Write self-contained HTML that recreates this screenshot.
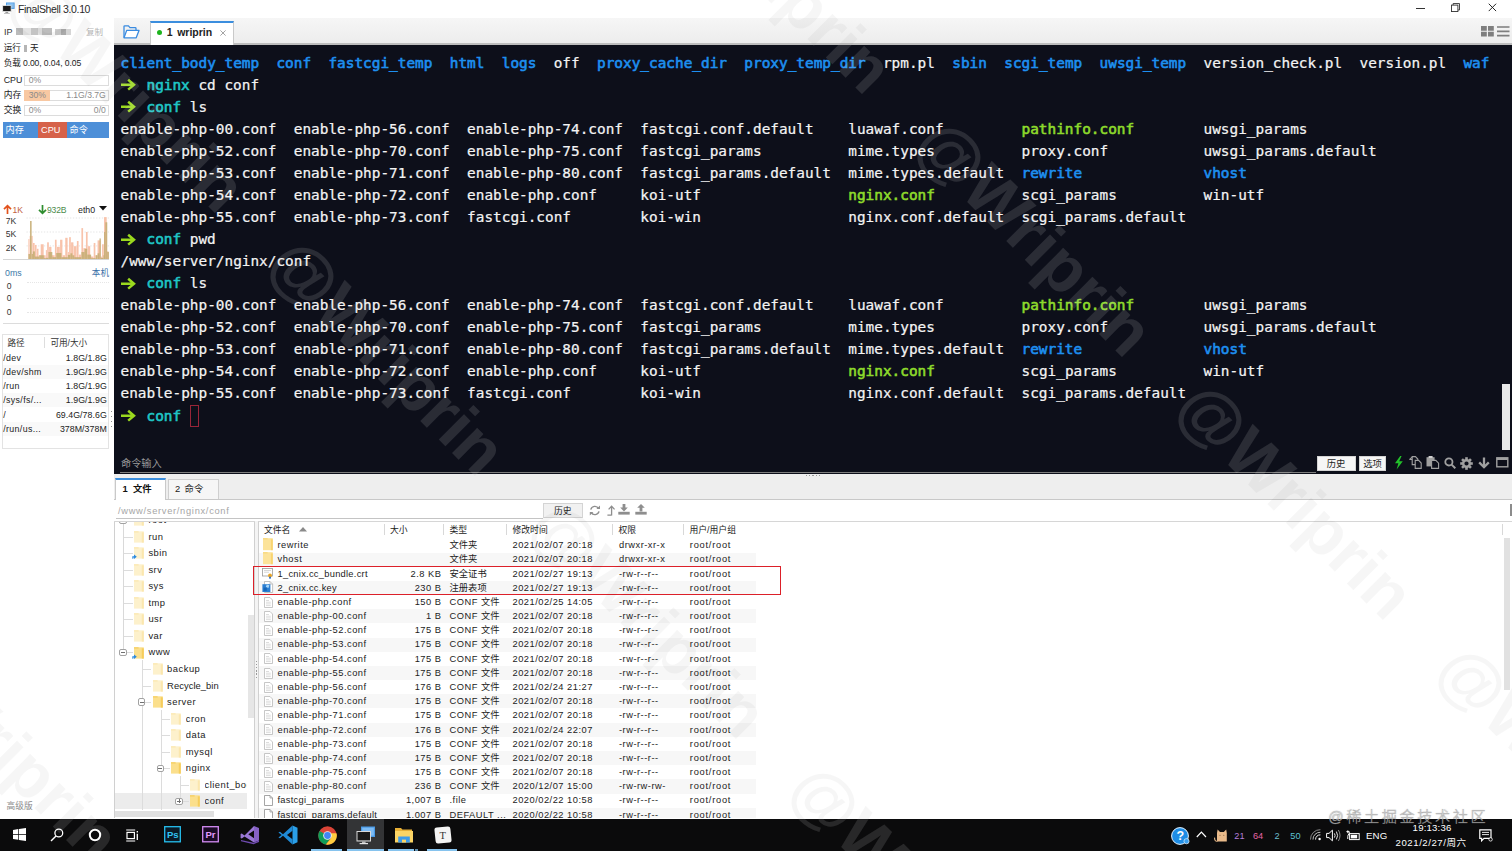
<!DOCTYPE html><html lang="zh"><head><meta charset="utf-8"><title>FinalShell 3.0.10</title><style>
*{box-sizing:border-box;margin:0;padding:0}
html,body{width:1512px;height:851px;overflow:hidden;background:#fff}
body{position:relative;font-family:"Liberation Sans","Noto Sans CJK SC",sans-serif;font-size:10px;color:#222;-webkit-font-smoothing:antialiased}
.a{position:absolute;white-space:nowrap}
.term{position:absolute;left:114px;top:45px;width:1398px;height:429px;background:#0d0f1a}
.tl{position:absolute;left:6.5px;height:22px;line-height:22px;white-space:pre;font-family:"DejaVu Sans Mono","Liberation Mono",monospace;font-size:14.4px;color:#f4f4f4;letter-spacing:0px;-webkit-text-stroke:0.22px}
.b{color:#1e8ff0;-webkit-text-stroke:0.6px}
.g{color:#9bd91e;-webkit-text-stroke:0.6px}
.c{color:#1fc6c6;-webkit-text-stroke:0.6px}
.y{color:#8dda2c;-webkit-text-stroke:0.6px}
.ar{display:inline-block;vertical-align:-2px;margin-left:-1px;margin-right:1px}
.k{letter-spacing:0}

.wm{position:absolute;left:0;top:0;width:1512px;height:851px;overflow:hidden;pointer-events:none}
.wm span{position:absolute;font:bold 67.5px/67.5px "Liberation Sans",sans-serif;white-space:nowrap;transform:translate(-50%,-50%) rotate(45deg)}
.wl{clip-path:path(evenodd,"M0 0H1512V851H0Z M114 44.7H1512V474H114Z M0 819.3H1512V851H0Z")}
.wl span{color:rgba(0,0,0,0.034)}
.wd{clip-path:path(evenodd,"M114 44.7H1512V474H114Z M0 819.3H1512V851H0Z")}
.wd span{color:rgba(255,255,255,0.12)}
.ui{font-size:10px}
</style></head><body>
<div class="a" style="left:0;top:0;width:1512px;height:18px;background:#fff"></div>
<div class="a" style="left:18px;top:3px;font-size:10.5px;line-height:12px;letter-spacing:-0.36px;color:#2a2a2a">FinalShell 3.0.10</div>
<div class="a" style="left:114px;top:18px;width:1398px;height:27px;background:linear-gradient(#f6f6f6,#ececec)"></div>
<div class="a" style="left:114px;top:43.4px;width:1398px;height:1.3px;background:#bdbdbd"></div>
<div class="a" style="left:150px;top:21px;width:84px;height:24px;background:#fff;border:1px solid #c9c9c9;border-top:2px solid #3b8ede;border-bottom:none"></div>
<div class="a" style="left:156.9px;top:30.2px;width:5.2px;height:5.2px;border-radius:50%;background:#1db31d"></div>
<div class="a" style="left:166.8px;top:25.4px;font-size:10.5px;line-height:14px;font-weight:bold;word-spacing:1.6px;color:#222">1 wriprin</div>
<svg class="a" style="left:219.8px;top:29.7px" width="6" height="6" viewBox="0 0 6 6"><path d="M0.4 0.4L5.6 5.6M5.6 0.4L0.4 5.6" stroke="#9a9a9a" stroke-width="0.9"/></svg>
<div class="term">
<div class="tl" style="top:6.70px"><span class="b">client_body_temp</span>  <span class="b">conf</span>  <span class="b">fastcgi_temp</span>  <span class="b">html</span>  <span class="b">logs</span>  off  <span class="b">proxy_cache_dir</span>  <span class="b">proxy_temp_dir</span>  rpm.pl  <span class="b">sbin</span>  <span class="b">scgi_temp</span>  <span class="b">uwsgi_temp</span>  version_check.pl  version.pl  <span class="b">waf</span></div>
<div class="tl" style="top:28.75px"><svg class="ar" viewBox="0 0 18 14" width="17.3" height="13.4"><path d="M1 7H14M8.5 1.8L14.6 7L8.5 12.2" fill="none" stroke="#9bd91e" stroke-width="2.6" stroke-linecap="butt" stroke-linejoin="miter"/></svg> <span class="c">nginx</span> cd conf</div>
<div class="tl" style="top:50.80px"><svg class="ar" viewBox="0 0 18 14" width="17.3" height="13.4"><path d="M1 7H14M8.5 1.8L14.6 7L8.5 12.2" fill="none" stroke="#9bd91e" stroke-width="2.6" stroke-linecap="butt" stroke-linejoin="miter"/></svg> <span class="c">conf</span> ls</div>
<div class="tl" style="top:72.85px">enable-php-00.conf  enable-php-56.conf  enable-php-74.conf  fastcgi.conf.default    luawaf.conf         <span class="y">pathinfo.conf</span>        uwsgi_params</div>
<div class="tl" style="top:94.90px">enable-php-52.conf  enable-php-70.conf  enable-php-75.conf  fastcgi_params          mime.types          proxy.conf           uwsgi_params.default</div>
<div class="tl" style="top:116.95px">enable-php-53.conf  enable-php-71.conf  enable-php-80.conf  fastcgi_params.default  mime.types.default  <span class="b">rewrite</span>              <span class="b">vhost</span></div>
<div class="tl" style="top:139.00px">enable-php-54.conf  enable-php-72.conf  enable-php.conf     koi-utf                 <span class="y">nginx.conf</span>          scgi_params          win-utf</div>
<div class="tl" style="top:161.05px">enable-php-55.conf  enable-php-73.conf  fastcgi.conf        koi-win                 nginx.conf.default  scgi_params.default</div>
<div class="tl" style="top:183.10px"><svg class="ar" viewBox="0 0 18 14" width="17.3" height="13.4"><path d="M1 7H14M8.5 1.8L14.6 7L8.5 12.2" fill="none" stroke="#9bd91e" stroke-width="2.6" stroke-linecap="butt" stroke-linejoin="miter"/></svg> <span class="c">conf</span> pwd</div>
<div class="tl" style="top:205.15px">/www/server/nginx/conf</div>
<div class="tl" style="top:227.20px"><svg class="ar" viewBox="0 0 18 14" width="17.3" height="13.4"><path d="M1 7H14M8.5 1.8L14.6 7L8.5 12.2" fill="none" stroke="#9bd91e" stroke-width="2.6" stroke-linecap="butt" stroke-linejoin="miter"/></svg> <span class="c">conf</span> ls</div>
<div class="tl" style="top:249.25px">enable-php-00.conf  enable-php-56.conf  enable-php-74.conf  fastcgi.conf.default    luawaf.conf         <span class="y">pathinfo.conf</span>        uwsgi_params</div>
<div class="tl" style="top:271.30px">enable-php-52.conf  enable-php-70.conf  enable-php-75.conf  fastcgi_params          mime.types          proxy.conf           uwsgi_params.default</div>
<div class="tl" style="top:293.35px">enable-php-53.conf  enable-php-71.conf  enable-php-80.conf  fastcgi_params.default  mime.types.default  <span class="b">rewrite</span>              <span class="b">vhost</span></div>
<div class="tl" style="top:315.40px">enable-php-54.conf  enable-php-72.conf  enable-php.conf     koi-utf                 <span class="y">nginx.conf</span>          scgi_params          win-utf</div>
<div class="tl" style="top:337.45px">enable-php-55.conf  enable-php-73.conf  fastcgi.conf        koi-win                 nginx.conf.default  scgi_params.default</div>
<div class="tl" style="top:359.50px"><svg class="ar" viewBox="0 0 18 14" width="17.3" height="13.4"><path d="M1 7H14M8.5 1.8L14.6 7L8.5 12.2" fill="none" stroke="#9bd91e" stroke-width="2.6" stroke-linecap="butt" stroke-linejoin="miter"/></svg> <span class="c">conf</span> </div>
</div>
<div class="a" style="left:4.0px;top:25.5px;line-height:12px;font-size:9px;color:#333">IP</div>
<div class="a" style="left:15.5px;top:28.0px;width:36.0px;height:7.0px;background:linear-gradient(90deg,#bbb 0 20%,#e4e4e4 20% 42%,#c4c4c4 42% 60%,#e0e0e0 60% 72%,#bdbdbd 72% 100%);filter:blur(0.6px)"></div>
<div class="a" style="left:55.0px;top:29.0px;width:15.5px;height:6.0px;background:linear-gradient(90deg,#ccc 0 40%,#aaa 40% 70%,#d5d5d5 70%);filter:blur(0.6px)"></div>
<div class="a" style="left:86.0px;top:25.5px;line-height:12px;font-size:8.5px;color:#b4b4b4">复制</div>
<div class="a" style="left:3.7px;top:42.0px;line-height:12px;font-size:8.6px;color:#222">运行</div>
<div class="a" style="left:24.0px;top:44.5px;width:2.6px;height:7.0px;background:#b5b5b5"></div>
<div class="a" style="left:30.0px;top:42.0px;line-height:12px;font-size:8.6px;color:#222">天</div>
<div class="a" style="left:3.7px;top:57.4px;line-height:12px;font-size:8.6px;color:#222;letter-spacing:-0.1px">负载 0.00, 0.04, 0.05</div>
<div class="a" style="left:3.7px;top:74.2px;line-height:12px;font-size:8.8px;color:#222">CPU</div>
<div class="a" style="left:24.3px;top:74.5px;width:84.5px;height:11.4px;border:1px solid #dcdcdc;background:#fff"></div>
<div class="a" style="left:28.7px;top:74.2px;line-height:12px;font-size:8.6px;color:#8a8a8a">0%</div>
<div class="a" style="left:3.7px;top:89.4px;line-height:12px;font-size:8.8px;color:#222">内存</div>
<div class="a" style="left:24.3px;top:89.7px;width:84.5px;height:11.4px;border:1px solid #dcdcdc;background:#fff"></div>
<div class="a" style="left:24.3px;top:89.7px;width:25.7px;height:11.4px;background:#f8c8a2"></div>
<div class="a" style="left:28.7px;top:89.4px;line-height:12px;font-size:8.6px;color:#8a8a8a">30%</div>
<div class="a" style="right:1406.2px;top:89.4px;line-height:12px;text-align:right;font-size:8.6px;color:#8a8a8a">1.1G/3.7G</div>
<div class="a" style="left:3.7px;top:104.2px;line-height:12px;font-size:8.8px;color:#222">交换</div>
<div class="a" style="left:24.3px;top:104.5px;width:84.5px;height:11.4px;border:1px solid #dcdcdc;background:#fff"></div>
<div class="a" style="left:28.7px;top:104.2px;line-height:12px;font-size:8.6px;color:#8a8a8a">0%</div>
<div class="a" style="right:1406.2px;top:104.2px;line-height:12px;text-align:right;font-size:8.6px;color:#8a8a8a">0/0</div>
<div class="a" style="left:3.2px;top:122.4px;width:35.0px;height:15.2px;background:#4d8fd8"></div>
<div class="a" style="left:38.2px;top:122.4px;width:28.7px;height:15.2px;background:#d6624a"></div>
<div class="a" style="left:66.9px;top:122.4px;width:42.6px;height:15.2px;background:#4d8fd8"></div>
<div class="a" style="left:5.5px;top:124.2px;line-height:12px;font-size:9.2px;color:#fff">内存</div>
<div class="a" style="left:41.0px;top:124.2px;line-height:12px;font-size:9.2px;color:#fff">CPU</div>
<div class="a" style="left:69.5px;top:124.2px;line-height:12px;font-size:9.2px;color:#fff">命令</div>
<svg class="a" style="left:3px;top:204px" width="9" height="11" viewBox="0 0 9 11"><path d="M4.5 10V2M1 5.2L4.5 1.6L8 5.2" fill="none" stroke="#e2521c" stroke-width="1.7"/></svg>
<div class="a" style="left:12.4px;top:203.5px;line-height:12px;font-size:8.6px;color:#c2623e">1K</div>
<svg class="a" style="left:37.5px;top:204px" width="9" height="11" viewBox="0 0 9 11"><path d="M4.5 1V9M1 5.8L4.5 9.4L8 5.8" fill="none" stroke="#2f8d2f" stroke-width="1.7"/></svg>
<div class="a" style="left:47.0px;top:203.5px;line-height:12px;font-size:8.6px;color:#4b8b4b;letter-spacing:-0.2px">932B</div>
<div class="a" style="left:78.0px;top:203.5px;line-height:12px;font-size:8.8px;color:#222">eth0</div>
<svg class="a" style="left:99px;top:206px" width="8" height="5" viewBox="0 0 8 5"><path d="M0 0H8L4 4.6Z" fill="#111"/></svg>
<div class="a" style="left:5.8px;top:215.4px;line-height:12px;font-size:8.6px;color:#333">7K</div>
<div class="a" style="left:5.8px;top:228.3px;line-height:12px;font-size:8.6px;color:#333">5K</div>
<div class="a" style="left:5.8px;top:242.2px;line-height:12px;font-size:8.6px;color:#333">2K</div>
<svg class="a" style="left:20px;top:210px" width="95" height="55" viewBox="0 0 95 55"><line x1="6.5" y1="8.0" x2="89" y2="8.0" stroke="#dedede" stroke-width="0.8" stroke-dasharray="1.3 1.6"/><line x1="6.5" y1="22.0" x2="89" y2="22.0" stroke="#dedede" stroke-width="0.8" stroke-dasharray="1.3 1.6"/><line x1="6.5" y1="35.9" x2="89" y2="35.9" stroke="#dedede" stroke-width="0.8" stroke-dasharray="1.3 1.6"/><rect x="8.40" y="29.09" width="1.04" height="20.36" fill="#f8c3ab"/><rect x="9.70" y="25.86" width="1.69" height="23.59" fill="#f8c3ab"/><rect x="11.64" y="25.86" width="1.04" height="23.59" fill="#f8c3ab"/><rect x="12.93" y="32.97" width="1.69" height="16.48" fill="#f8c3ab"/><rect x="14.87" y="34.91" width="1.69" height="14.54" fill="#f8c3ab"/><rect x="16.81" y="38.78" width="1.69" height="10.67" fill="#f8c3ab"/><rect x="18.75" y="45.25" width="1.69" height="4.20" fill="#f8c3ab"/><rect x="20.69" y="34.26" width="2.98" height="15.19" fill="#f8c3ab"/><rect x="23.92" y="45.25" width="1.69" height="4.20" fill="#f8c3ab"/><rect x="25.86" y="40.08" width="1.04" height="9.37" fill="#f8c3ab"/><rect x="27.15" y="32.32" width="1.69" height="17.13" fill="#f8c3ab"/><rect x="29.09" y="36.85" width="2.34" height="12.61" fill="#f8c3ab"/><rect x="31.67" y="45.25" width="2.98" height="4.20" fill="#f8c3ab"/><rect x="34.91" y="29.73" width="1.69" height="19.72" fill="#f8c3ab"/><rect x="36.85" y="36.85" width="2.98" height="12.61" fill="#f8c3ab"/><rect x="40.08" y="29.73" width="2.34" height="19.72" fill="#f8c3ab"/><rect x="42.66" y="45.25" width="2.34" height="4.20" fill="#f8c3ab"/><rect x="45.25" y="27.80" width="2.34" height="21.65" fill="#f8c3ab"/><rect x="47.83" y="42.02" width="1.04" height="7.43" fill="#f8c3ab"/><rect x="49.13" y="27.15" width="1.69" height="22.30" fill="#f8c3ab"/><rect x="51.07" y="32.32" width="2.34" height="17.13" fill="#f8c3ab"/><rect x="53.65" y="36.20" width="2.98" height="13.25" fill="#f8c3ab"/><rect x="56.88" y="31.03" width="1.69" height="18.42" fill="#f8c3ab"/><rect x="58.82" y="44.60" width="2.34" height="4.85" fill="#f8c3ab"/><rect x="61.41" y="18.10" width="1.69" height="31.35" fill="#f8c3ab"/><rect x="63.35" y="38.14" width="2.34" height="11.31" fill="#f8c3ab"/><rect x="65.93" y="21.98" width="1.69" height="27.47" fill="#f8c3ab"/><rect x="67.87" y="36.20" width="2.34" height="13.25" fill="#f8c3ab"/><rect x="70.46" y="46.54" width="2.98" height="2.91" fill="#f8c3ab"/><rect x="73.69" y="32.97" width="1.69" height="16.48" fill="#f8c3ab"/><rect x="75.63" y="45.25" width="1.69" height="4.20" fill="#f8c3ab"/><rect x="77.57" y="30.38" width="2.98" height="19.07" fill="#f8c3ab"/><rect x="80.80" y="46.54" width="1.04" height="2.91" fill="#f8c3ab"/><rect x="82.09" y="34.26" width="1.69" height="15.19" fill="#f8c3ab"/><rect x="84.03" y="7.11" width="2.66" height="42.34" fill="#f8c3ab"/><rect x="86.94" y="41.37" width="1.69" height="8.08" fill="#f8c3ab"/><rect x="8.40" y="43.96" width="1.62" height="5.49" fill="#c7ae76" opacity="0.9"/><rect x="10.02" y="10.99" width="1.62" height="38.46" fill="#c7ae76" opacity="0.9"/><rect x="11.64" y="43.96" width="1.29" height="5.49" fill="#c7ae76" opacity="0.9"/><rect x="12.93" y="41.37" width="1.94" height="8.08" fill="#c7ae76" opacity="0.9"/><rect x="14.87" y="46.54" width="4.52" height="2.91" fill="#c7ae76" opacity="0.9"/><rect x="19.39" y="45.25" width="4.52" height="4.20" fill="#c7ae76" opacity="0.9"/><rect x="23.92" y="48.16" width="1.94" height="1.29" fill="#c7ae76" opacity="0.9"/><rect x="25.86" y="47.83" width="2.59" height="1.62" fill="#c7ae76" opacity="0.9"/><rect x="28.44" y="42.02" width="3.88" height="7.43" fill="#c7ae76" opacity="0.9"/><rect x="32.32" y="47.19" width="3.88" height="2.26" fill="#c7ae76" opacity="0.9"/><rect x="36.20" y="42.99" width="5.17" height="6.46" fill="#c7ae76" opacity="0.9"/><rect x="41.37" y="47.19" width="6.46" height="2.26" fill="#c7ae76" opacity="0.9"/><rect x="47.83" y="44.93" width="2.59" height="4.52" fill="#c7ae76" opacity="0.9"/><rect x="50.42" y="43.31" width="1.94" height="6.14" fill="#c7ae76" opacity="0.9"/><rect x="52.36" y="45.25" width="1.94" height="4.20" fill="#c7ae76" opacity="0.9"/><rect x="54.30" y="47.19" width="7.11" height="2.26" fill="#c7ae76" opacity="0.9"/><rect x="61.41" y="42.02" width="3.23" height="7.43" fill="#c7ae76" opacity="0.9"/><rect x="64.64" y="38.78" width="2.59" height="10.67" fill="#c7ae76" opacity="0.9"/><rect x="67.23" y="44.60" width="3.88" height="4.85" fill="#c7ae76" opacity="0.9"/><rect x="71.11" y="48.16" width="4.52" height="1.29" fill="#c7ae76" opacity="0.9"/><rect x="75.63" y="45.25" width="1.94" height="4.20" fill="#c7ae76" opacity="0.9"/><rect x="77.57" y="43.31" width="1.94" height="6.14" fill="#c7ae76" opacity="0.9"/><rect x="79.51" y="28.44" width="1.29" height="21.01" fill="#c7ae76" opacity="0.9"/><rect x="80.80" y="47.83" width="2.59" height="1.62" fill="#c7ae76" opacity="0.9"/><rect x="83.39" y="45.25" width="1.29" height="4.20" fill="#c7ae76" opacity="0.9"/><rect x="84.03" y="21.98" width="1.29" height="27.47" fill="#c7ae76" opacity="0.9"/><rect x="85.33" y="12.28" width="1.94" height="37.17" fill="#c7ae76" opacity="0.9"/><rect x="87.27" y="42.02" width="1.62" height="7.43" fill="#c7ae76" opacity="0.9"/></svg>
<div class="a" style="left:3.3px;top:259.4px;width:106.0px;height:1.0px;background:#d6d6d6"></div>
<div class="a" style="left:5.0px;top:266.5px;line-height:12px;font-size:8.8px;color:#3c7aa8">0ms</div>
<div class="a" style="left:91.8px;top:266.5px;line-height:12px;font-size:8.6px;color:#3c6fa8">本机</div>
<div class="a" style="left:6.8px;top:280.2px;line-height:12px;font-size:8.6px;color:#333">0</div>
<div class="a" style="left:26.5px;top:282.3px;width:82px;height:0;border-top:1px dotted #e6e6e6"></div>
<div class="a" style="left:6.8px;top:292.3px;line-height:12px;font-size:8.6px;color:#333">0</div>
<div class="a" style="left:26.5px;top:297.8px;width:82px;height:0;border-top:1px dotted #e6e6e6"></div>
<div class="a" style="left:6.8px;top:306.4px;line-height:12px;font-size:8.6px;color:#333">0</div>
<div class="a" style="left:26.5px;top:311.9px;width:82px;height:0;border-top:1px dotted #e6e6e6"></div>
<div class="a" style="left:3.3px;top:323.0px;width:106.0px;height:1.0px;background:#dcdcdc"></div>
<div class="a" style="left:1.7px;top:334.0px;width:107.5px;height:115.0px;border:1px solid #e3e3e3;background:#fff"></div>
<div class="a" style="left:44.3px;top:337.0px;width:1.0px;height:11.0px;background:#ddd"></div>
<div class="a" style="left:7.4px;top:336.5px;line-height:12px;font-size:8.6px;color:#333">路径</div>
<div class="a" style="left:50.4px;top:336.5px;line-height:12px;font-size:8.6px;color:#333">可用/大小</div>
<div class="a" style="left:3.3px;top:351.8px;line-height:12px;font-size:8.8px;color:#222;letter-spacing:0.35px">/dev</div>
<div class="a" style="right:1405.2px;top:351.8px;line-height:12px;text-align:right;font-size:8.8px;color:#222;letter-spacing:0.05px">1.8G/1.8G</div>
<div class="a" style="left:2.7px;top:365.0px;width:105.5px;height:14.2px;background:#f9f9f9"></div>
<div class="a" style="left:3.3px;top:366.0px;line-height:12px;font-size:8.8px;color:#222;letter-spacing:0.35px">/dev/shm</div>
<div class="a" style="right:1405.2px;top:366.0px;line-height:12px;text-align:right;font-size:8.8px;color:#222;letter-spacing:0.05px">1.9G/1.9G</div>
<div class="a" style="left:3.3px;top:380.2px;line-height:12px;font-size:8.8px;color:#222;letter-spacing:0.35px">/run</div>
<div class="a" style="right:1405.2px;top:380.2px;line-height:12px;text-align:right;font-size:8.8px;color:#222;letter-spacing:0.05px">1.8G/1.9G</div>
<div class="a" style="left:2.7px;top:393.3px;width:105.5px;height:14.2px;background:#f9f9f9"></div>
<div class="a" style="left:3.3px;top:394.3px;line-height:12px;font-size:8.8px;color:#222;letter-spacing:0.35px">/sys/fs/...</div>
<div class="a" style="right:1405.2px;top:394.3px;line-height:12px;text-align:right;font-size:8.8px;color:#222;letter-spacing:0.05px">1.9G/1.9G</div>
<div class="a" style="left:3.3px;top:408.5px;line-height:12px;font-size:8.8px;color:#222;letter-spacing:0.35px">/</div>
<div class="a" style="right:1405.2px;top:408.5px;line-height:12px;text-align:right;font-size:8.8px;color:#222;letter-spacing:0.05px">69.4G/78.6G</div>
<div class="a" style="left:2.7px;top:421.7px;width:105.5px;height:14.2px;background:#f9f9f9"></div>
<div class="a" style="left:3.3px;top:422.7px;line-height:12px;font-size:8.8px;color:#222;letter-spacing:0.35px">/run/us...</div>
<div class="a" style="right:1405.2px;top:422.7px;line-height:12px;text-align:right;font-size:8.8px;color:#222;letter-spacing:0.05px">378M/378M</div>
<div class="a" style="left:6.5px;top:800.0px;line-height:12px;font-size:8.7px;color:#8a8a8a">高级版</div>
<div class="a" style="left:121.0px;top:458.2px;line-height:12px;font-size:10.2px;color:#9c9c9c">命令输入</div>
<div class="a" style="left:120.0px;top:471.5px;width:1196.0px;height:1.0px;background:#7d7d7d"></div>
<div class="a" style="left:1316.5px;top:455.8px;width:39.7px;height:15.7px;background:#f6f6f6;border:1px solid #d4d4d4"></div>
<div class="a" style="left:1326.7px;top:457.8px;line-height:12px;font-size:9.4px;color:#222">历史</div>
<div class="a" style="left:1359.0px;top:455.8px;width:27.3px;height:15.7px;background:#f6f6f6;border:1px solid #d4d4d4"></div>
<div class="a" style="left:1363.2px;top:457.8px;line-height:12px;font-size:9.4px;color:#222">选项</div>
<div class="a" style="left:1502.0px;top:384.0px;width:7.5px;height:66.0px;background:#e9e9e9"></div>
<div class="a" style="left:114.0px;top:474.0px;width:1398.0px;height:25.5px;background:#eeeeee"></div>
<div class="a" style="left:114.0px;top:499.0px;width:1398.0px;height:1.0px;background:#c8c8c8"></div>
<div class="a" style="left:115.0px;top:478.2px;width:50.6px;height:22.0px;background:#fff;border:1px solid #c9c9c9;border-top:2px solid #3b8ede;border-bottom:none"></div>
<div class="a" style="left:168.0px;top:478.5px;width:50.5px;height:20.5px;background:#f6f6f6;border:1px solid #cfcfcf;border-bottom:none"></div>
<div class="a" style="left:122.5px;top:483.3px;line-height:12px;font-size:9.4px;color:#111;font-weight:bold;word-spacing:2.6px">1 文件</div>
<div class="a" style="left:175.0px;top:483.3px;line-height:12px;font-size:9.4px;color:#222;word-spacing:1.8px">2 命令</div>
<div class="a" style="left:806.0px;top:474.5px;width:1.2px;height:1.2px;background:#999"></div>
<div class="a" style="left:809.2px;top:474.5px;width:1.2px;height:1.2px;background:#999"></div>
<div class="a" style="left:812.4px;top:474.5px;width:1.2px;height:1.2px;background:#999"></div>
<div class="a" style="left:815.6px;top:474.5px;width:1.2px;height:1.2px;background:#999"></div>
<div class="a" style="left:818.8px;top:474.5px;width:1.2px;height:1.2px;background:#999"></div>
<div class="a" style="left:114.0px;top:500.0px;width:1398.0px;height:21.0px;background:#fff"></div>
<div class="a" style="left:543.4px;top:503.3px;width:39.8px;height:14.7px;background:#f1f1f1;border:1px solid #d4d4d4"></div>
<div class="a" style="left:554.0px;top:504.8px;line-height:12px;font-size:8.8px;color:#222">历史</div>
<div class="a" style="left:113.5px;top:521.0px;width:141.5px;height:296.5px;background:#fff;border:1px solid #d0d0d0;border-bottom:none"></div>
<div class="a" style="left:255.0px;top:521.0px;width:2.5px;height:296.5px;background:#f4f4f4"></div>
<div class="a" style="left:115.0px;top:793.3px;width:132.0px;height:16.2px;background:#ececec"></div>
<div class="a" style="left:123.0px;top:521.0px;width:1.0px;height:131.0px;background:#d9d9d9"></div>
<div class="a" style="left:142.0px;top:660.0px;width:1.0px;height:150.0px;background:#dcdcdc"></div>
<div class="a" style="left:160.7px;top:710.0px;width:1.0px;height:100.0px;background:#dcdcdc"></div>
<div class="a" style="left:179.5px;top:776.0px;width:1.0px;height:22.0px;background:#dcdcdc"></div>
<div class="a" style="left:123.5px;top:520.1px;width:9.0px;height:1.0px;background:#dcdcdc"></div>
<svg class="a" style="left:134.0px;top:514.2px" width="10" height="12" viewBox="0 0 10 12"><rect x="0" y="0.3" width="9.8" height="11.3" fill="#fdf1cc"/><rect x="7.8" y="1.3" width="2" height="10.3" fill="#fbe7ae"/><rect x="0" y="0.3" width="4.6" height="1.2" fill="#fbe7ae"/></svg>
<div class="a" style="left:119.3px;top:516.4px;width:7.4px;height:7.4px;border:1px solid #a2a2a2;border-radius:2px;background:#fff"></div>
<div class="a" style="left:121.0px;top:519.6px;width:4.0px;height:0.9px;background:#707070"></div>
<div class="a" style="left:122.5px;top:518.1px;width:0.9px;height:4.0px;background:#707070"></div>
<div class="a" style="left:148.4px;top:514.1px;line-height:12px;font-size:9.4px;letter-spacing:0.5px;color:#222;max-width:98.6px;overflow:hidden">root</div>
<div class="a" style="left:123.5px;top:536.6px;width:9.0px;height:1.0px;background:#dcdcdc"></div>
<svg class="a" style="left:134.0px;top:530.7px" width="10" height="12" viewBox="0 0 10 12"><rect x="0" y="0.3" width="9.8" height="11.3" fill="#fdf1cc"/><rect x="7.8" y="1.3" width="2" height="10.3" fill="#fbe7ae"/><rect x="0" y="0.3" width="4.6" height="1.2" fill="#fbe7ae"/></svg>
<div class="a" style="left:148.4px;top:530.6px;line-height:12px;font-size:9.4px;letter-spacing:0.5px;color:#222;max-width:98.6px;overflow:hidden">run</div>
<div class="a" style="left:123.5px;top:553.2px;width:9.0px;height:1.0px;background:#dcdcdc"></div>
<svg class="a" style="left:134.0px;top:547.3px" width="10" height="12" viewBox="0 0 10 12"><rect x="0" y="0.3" width="9.8" height="11.3" fill="#fdf1cc"/><rect x="7.8" y="1.3" width="2" height="10.3" fill="#fbe7ae"/><rect x="0" y="0.3" width="4.6" height="1.2" fill="#fbe7ae"/></svg>
<svg class="a" style="left:132.4px;top:554.4px" width="5" height="5" viewBox="0 0 5 5"><path d="M0.3 4.7V2.2H2V0.4L4.8 2.8L2 4.9V3.4H1.4V4.7Z" fill="#2a8ae0"/></svg>
<div class="a" style="left:148.4px;top:547.2px;line-height:12px;font-size:9.4px;letter-spacing:0.5px;color:#222;max-width:98.6px;overflow:hidden">sbin</div>
<div class="a" style="left:123.5px;top:569.7px;width:9.0px;height:1.0px;background:#dcdcdc"></div>
<svg class="a" style="left:134.0px;top:563.8px" width="10" height="12" viewBox="0 0 10 12"><rect x="0" y="0.3" width="9.8" height="11.3" fill="#fdf1cc"/><rect x="7.8" y="1.3" width="2" height="10.3" fill="#fbe7ae"/><rect x="0" y="0.3" width="4.6" height="1.2" fill="#fbe7ae"/></svg>
<div class="a" style="left:148.4px;top:563.7px;line-height:12px;font-size:9.4px;letter-spacing:0.5px;color:#222;max-width:98.6px;overflow:hidden">srv</div>
<div class="a" style="left:123.5px;top:586.3px;width:9.0px;height:1.0px;background:#dcdcdc"></div>
<svg class="a" style="left:134.0px;top:580.4px" width="10" height="12" viewBox="0 0 10 12"><rect x="0" y="0.3" width="9.8" height="11.3" fill="#fdf1cc"/><rect x="7.8" y="1.3" width="2" height="10.3" fill="#fbe7ae"/><rect x="0" y="0.3" width="4.6" height="1.2" fill="#fbe7ae"/></svg>
<div class="a" style="left:148.4px;top:580.3px;line-height:12px;font-size:9.4px;letter-spacing:0.5px;color:#222;max-width:98.6px;overflow:hidden">sys</div>
<div class="a" style="left:123.5px;top:602.8px;width:9.0px;height:1.0px;background:#dcdcdc"></div>
<svg class="a" style="left:134.0px;top:596.9px" width="10" height="12" viewBox="0 0 10 12"><rect x="0" y="0.3" width="9.8" height="11.3" fill="#fdf1cc"/><rect x="7.8" y="1.3" width="2" height="10.3" fill="#fbe7ae"/><rect x="0" y="0.3" width="4.6" height="1.2" fill="#fbe7ae"/></svg>
<div class="a" style="left:148.4px;top:596.8px;line-height:12px;font-size:9.4px;letter-spacing:0.5px;color:#222;max-width:98.6px;overflow:hidden">tmp</div>
<div class="a" style="left:123.5px;top:619.3px;width:9.0px;height:1.0px;background:#dcdcdc"></div>
<svg class="a" style="left:134.0px;top:613.4px" width="10" height="12" viewBox="0 0 10 12"><rect x="0" y="0.3" width="9.8" height="11.3" fill="#fdf1cc"/><rect x="7.8" y="1.3" width="2" height="10.3" fill="#fbe7ae"/><rect x="0" y="0.3" width="4.6" height="1.2" fill="#fbe7ae"/></svg>
<div class="a" style="left:148.4px;top:613.3px;line-height:12px;font-size:9.4px;letter-spacing:0.5px;color:#222;max-width:98.6px;overflow:hidden">usr</div>
<div class="a" style="left:123.5px;top:635.9px;width:9.0px;height:1.0px;background:#dcdcdc"></div>
<svg class="a" style="left:134.0px;top:630.0px" width="10" height="12" viewBox="0 0 10 12"><rect x="0" y="0.3" width="9.8" height="11.3" fill="#fdf1cc"/><rect x="7.8" y="1.3" width="2" height="10.3" fill="#fbe7ae"/><rect x="0" y="0.3" width="4.6" height="1.2" fill="#fbe7ae"/></svg>
<div class="a" style="left:148.4px;top:629.9px;line-height:12px;font-size:9.4px;letter-spacing:0.5px;color:#222;max-width:98.6px;overflow:hidden">var</div>
<div class="a" style="left:123.5px;top:652.4px;width:9.0px;height:1.0px;background:#dcdcdc"></div>
<svg class="a" style="left:134.0px;top:646.5px" width="10" height="12" viewBox="0 0 10 12"><rect x="0" y="0.3" width="9.8" height="11.3" fill="#fbdf8c"/><rect x="7.8" y="1.3" width="2" height="10.3" fill="#f6cd5c"/><rect x="0" y="0.3" width="4.6" height="1.2" fill="#f6cd5c"/></svg>
<svg class="a" style="left:132.4px;top:653.6px" width="5" height="5" viewBox="0 0 5 5"><path d="M0.3 4.7V2.2H2V0.4L4.8 2.8L2 4.9V3.4H1.4V4.7Z" fill="#2a8ae0"/></svg>
<div class="a" style="left:119.3px;top:648.7px;width:7.4px;height:7.4px;border:1px solid #a2a2a2;border-radius:2px;background:#fff"></div>
<div class="a" style="left:121.0px;top:652.0px;width:4.0px;height:0.9px;background:#707070"></div>
<div class="a" style="left:148.4px;top:646.4px;line-height:12px;font-size:9.4px;letter-spacing:0.5px;color:#222;max-width:98.6px;overflow:hidden">www</div>
<div class="a" style="left:142.2px;top:669.0px;width:9.0px;height:1.0px;background:#dcdcdc"></div>
<svg class="a" style="left:152.7px;top:663.1px" width="10" height="12" viewBox="0 0 10 12"><rect x="0" y="0.3" width="9.8" height="11.3" fill="#fdf1cc"/><rect x="7.8" y="1.3" width="2" height="10.3" fill="#fbe7ae"/><rect x="0" y="0.3" width="4.6" height="1.2" fill="#fbe7ae"/></svg>
<div class="a" style="left:167.1px;top:663.0px;line-height:12px;font-size:9.4px;letter-spacing:0.5px;color:#222;max-width:79.9px;overflow:hidden">backup</div>
<div class="a" style="left:142.2px;top:685.5px;width:9.0px;height:1.0px;background:#dcdcdc"></div>
<svg class="a" style="left:152.7px;top:679.6px" width="10" height="12" viewBox="0 0 10 12"><rect x="0" y="0.3" width="9.8" height="11.3" fill="#fdf1cc"/><rect x="7.8" y="1.3" width="2" height="10.3" fill="#fbe7ae"/><rect x="0" y="0.3" width="4.6" height="1.2" fill="#fbe7ae"/></svg>
<div class="a" style="left:167.1px;top:679.5px;line-height:12px;font-size:9.4px;letter-spacing:0.5px;color:#222;max-width:79.9px;overflow:hidden"><span style="letter-spacing:0.05px">Recycle_bin</span></div>
<div class="a" style="left:142.2px;top:702.0px;width:9.0px;height:1.0px;background:#dcdcdc"></div>
<svg class="a" style="left:152.7px;top:696.1px" width="10" height="12" viewBox="0 0 10 12"><rect x="0" y="0.3" width="9.8" height="11.3" fill="#fbdf8c"/><rect x="7.8" y="1.3" width="2" height="10.3" fill="#f6cd5c"/><rect x="0" y="0.3" width="4.6" height="1.2" fill="#f6cd5c"/></svg>
<div class="a" style="left:138.0px;top:698.3px;width:7.4px;height:7.4px;border:1px solid #a2a2a2;border-radius:2px;background:#fff"></div>
<div class="a" style="left:139.7px;top:701.6px;width:4.0px;height:0.9px;background:#707070"></div>
<div class="a" style="left:167.1px;top:696.0px;line-height:12px;font-size:9.4px;letter-spacing:0.5px;color:#222;max-width:79.9px;overflow:hidden">server</div>
<div class="a" style="left:160.9px;top:718.6px;width:9.0px;height:1.0px;background:#dcdcdc"></div>
<svg class="a" style="left:171.4px;top:712.7px" width="10" height="12" viewBox="0 0 10 12"><rect x="0" y="0.3" width="9.8" height="11.3" fill="#fdf1cc"/><rect x="7.8" y="1.3" width="2" height="10.3" fill="#fbe7ae"/><rect x="0" y="0.3" width="4.6" height="1.2" fill="#fbe7ae"/></svg>
<div class="a" style="left:185.8px;top:712.6px;line-height:12px;font-size:9.4px;letter-spacing:0.5px;color:#222;max-width:61.2px;overflow:hidden">cron</div>
<div class="a" style="left:160.9px;top:735.1px;width:9.0px;height:1.0px;background:#dcdcdc"></div>
<svg class="a" style="left:171.4px;top:729.2px" width="10" height="12" viewBox="0 0 10 12"><rect x="0" y="0.3" width="9.8" height="11.3" fill="#fdf1cc"/><rect x="7.8" y="1.3" width="2" height="10.3" fill="#fbe7ae"/><rect x="0" y="0.3" width="4.6" height="1.2" fill="#fbe7ae"/></svg>
<div class="a" style="left:185.8px;top:729.1px;line-height:12px;font-size:9.4px;letter-spacing:0.5px;color:#222;max-width:61.2px;overflow:hidden">data</div>
<div class="a" style="left:160.9px;top:751.7px;width:9.0px;height:1.0px;background:#dcdcdc"></div>
<svg class="a" style="left:171.4px;top:745.8px" width="10" height="12" viewBox="0 0 10 12"><rect x="0" y="0.3" width="9.8" height="11.3" fill="#fdf1cc"/><rect x="7.8" y="1.3" width="2" height="10.3" fill="#fbe7ae"/><rect x="0" y="0.3" width="4.6" height="1.2" fill="#fbe7ae"/></svg>
<div class="a" style="left:185.8px;top:745.7px;line-height:12px;font-size:9.4px;letter-spacing:0.5px;color:#222;max-width:61.2px;overflow:hidden">mysql</div>
<div class="a" style="left:160.9px;top:768.2px;width:9.0px;height:1.0px;background:#dcdcdc"></div>
<svg class="a" style="left:171.4px;top:762.3px" width="10" height="12" viewBox="0 0 10 12"><rect x="0" y="0.3" width="9.8" height="11.3" fill="#fbdf8c"/><rect x="7.8" y="1.3" width="2" height="10.3" fill="#f6cd5c"/><rect x="0" y="0.3" width="4.6" height="1.2" fill="#f6cd5c"/></svg>
<div class="a" style="left:156.7px;top:764.5px;width:7.4px;height:7.4px;border:1px solid #a2a2a2;border-radius:2px;background:#fff"></div>
<div class="a" style="left:158.4px;top:767.8px;width:4.0px;height:0.9px;background:#707070"></div>
<div class="a" style="left:185.8px;top:762.2px;line-height:12px;font-size:9.4px;letter-spacing:0.5px;color:#222;max-width:61.2px;overflow:hidden">nginx</div>
<div class="a" style="left:179.6px;top:784.7px;width:9.0px;height:1.0px;background:#dcdcdc"></div>
<svg class="a" style="left:190.1px;top:778.8px" width="10" height="12" viewBox="0 0 10 12"><rect x="0" y="0.3" width="9.8" height="11.3" fill="#fdf1cc"/><rect x="7.8" y="1.3" width="2" height="10.3" fill="#fbe7ae"/><rect x="0" y="0.3" width="4.6" height="1.2" fill="#fbe7ae"/></svg>
<div class="a" style="left:204.5px;top:778.7px;line-height:12px;font-size:9.4px;letter-spacing:0.5px;color:#222;max-width:42.5px;overflow:hidden">client_bo<span style="color:#999">c</span></div>
<div class="a" style="left:179.6px;top:801.3px;width:9.0px;height:1.0px;background:#dcdcdc"></div>
<svg class="a" style="left:190.1px;top:795.4px" width="10" height="12" viewBox="0 0 10 12"><rect x="0" y="0.3" width="9.8" height="11.3" fill="#fbdf8c"/><rect x="7.8" y="1.3" width="2" height="10.3" fill="#f6cd5c"/><rect x="0" y="0.3" width="4.6" height="1.2" fill="#f6cd5c"/></svg>
<div class="a" style="left:175.4px;top:797.6px;width:7.4px;height:7.4px;border:1px solid #a2a2a2;border-radius:2px;background:#fff"></div>
<div class="a" style="left:177.1px;top:800.8px;width:4.0px;height:0.9px;background:#707070"></div>
<div class="a" style="left:178.7px;top:799.3px;width:0.9px;height:4.0px;background:#707070"></div>
<div class="a" style="left:204.5px;top:795.3px;line-height:12px;font-size:9.4px;letter-spacing:0.5px;color:#222;max-width:42.5px;overflow:hidden">conf</div>
<div class="a" style="left:248.2px;top:614.5px;width:5.5px;height:103.5px;background:#e6e6e6"></div>
<div class="a" style="left:114.5px;top:810.7px;width:99.5px;height:6.8px;background:#e0e0e0"></div>
<div class="a" style="left:255.8px;top:661.0px;width:1.1px;height:1.3px;background:#9a9a9a"></div>
<div class="a" style="left:255.8px;top:664.1px;width:1.1px;height:1.3px;background:#9a9a9a"></div>
<div class="a" style="left:255.8px;top:667.2px;width:1.1px;height:1.3px;background:#9a9a9a"></div>
<div class="a" style="left:255.8px;top:670.3px;width:1.1px;height:1.3px;background:#9a9a9a"></div>
<div class="a" style="left:255.8px;top:673.4px;width:1.1px;height:1.3px;background:#9a9a9a"></div>
<div class="a" style="left:255.8px;top:676.5px;width:1.1px;height:1.3px;background:#9a9a9a"></div>
<div class="a" style="left:114.0px;top:500.0px;width:141.0px;height:21.0px;background:#fff"></div>
<div class="a" style="left:118.0px;top:504.6px;line-height:12px;font-size:9.3px;letter-spacing:0.7px;color:#a6a6a6">/www/server/nginx/conf</div>
<div class="a" style="left:116.0px;top:517.6px;width:427.0px;height:1.0px;background:#c4c4c4"></div>
<div class="a" style="left:114.0px;top:520.6px;width:141.0px;height:1.0px;background:#d6d6d6"></div>
<div class="a" style="left:257.5px;top:520.6px;width:1254.5px;height:297.0px;background:#fff;border-left:1px solid #d0d0d0;border-top:1px solid #d6d6d6"></div>
<div class="a" style="left:264.0px;top:524.0px;line-height:12px;font-size:8.8px;color:#222">文件名</div>
<div class="a" style="left:390.0px;top:524.0px;line-height:12px;font-size:8.8px;color:#222">大小</div>
<div class="a" style="left:449.5px;top:524.0px;line-height:12px;font-size:8.8px;color:#222">类型</div>
<div class="a" style="left:512.5px;top:524.0px;line-height:12px;font-size:8.8px;color:#222">修改时间</div>
<div class="a" style="left:618.5px;top:524.0px;line-height:12px;font-size:8.8px;color:#222">权限</div>
<div class="a" style="left:689.5px;top:524.0px;line-height:12px;font-size:8.8px;color:#222">用户/用户组</div>
<div class="a" style="left:383.5px;top:523.5px;width:1.0px;height:11.2px;background:#d8d8d8"></div>
<div class="a" style="left:443.0px;top:523.5px;width:1.0px;height:11.2px;background:#d8d8d8"></div>
<div class="a" style="left:505.8px;top:523.5px;width:1.0px;height:11.2px;background:#d8d8d8"></div>
<div class="a" style="left:612.3px;top:523.5px;width:1.0px;height:11.2px;background:#d8d8d8"></div>
<div class="a" style="left:683.0px;top:523.5px;width:1.0px;height:11.2px;background:#d8d8d8"></div>
<svg class="a" style="left:298.5px;top:526.5px" width="8" height="5" viewBox="0 0 8 5"><path d="M0 4.6H8L4 0Z" fill="#8a8a8a"/></svg>
<svg class="a" style="left:263.1px;top:538.1px" width="10" height="13" viewBox="0 0 10 13"><rect x="0" y="0.2" width="9.8" height="12" fill="#fce39a"/><rect x="7.9" y="1.4" width="1.9" height="10.8" fill="#f8d470"/><rect x="0" y="0.2" width="4.6" height="1.2" fill="#f8d77a"/></svg>
<div class="a" style="left:277.5px;top:539.2px;line-height:12px;font-size:9.3px;color:#1c1c1c;letter-spacing:0.5px">rewrite</div>
<div class="a" style="left:449.5px;top:539.2px;line-height:12px;font-size:9.3px;color:#1c1c1c;letter-spacing:0.5px"><span class="k">文件夹</span></div>
<div class="a" style="left:512.5px;top:539.2px;line-height:12px;font-size:9.3px;color:#1c1c1c;letter-spacing:0.5px">2021/02/07 20:18</div>
<div class="a" style="left:619.0px;top:539.2px;line-height:12px;font-size:9.3px;color:#1c1c1c;letter-spacing:0.5px">drwxr-xr-x</div>
<div class="a" style="left:689.8px;top:539.2px;line-height:12px;font-size:9.3px;color:#1c1c1c;letter-spacing:0.5px;letter-spacing:0.75px">root/root</div>
<div class="a" style="left:259.0px;top:552.6px;width:497.0px;height:14.2px;background:#f7f7f7"></div>
<svg class="a" style="left:263.1px;top:552.3px" width="10" height="13" viewBox="0 0 10 13"><rect x="0" y="0.2" width="9.8" height="12" fill="#fce39a"/><rect x="7.9" y="1.4" width="1.9" height="10.8" fill="#f8d470"/><rect x="0" y="0.2" width="4.6" height="1.2" fill="#f8d77a"/></svg>
<div class="a" style="left:277.5px;top:553.4px;line-height:12px;font-size:9.3px;color:#1c1c1c;letter-spacing:0.5px">vhost</div>
<div class="a" style="left:449.5px;top:553.4px;line-height:12px;font-size:9.3px;color:#1c1c1c;letter-spacing:0.5px"><span class="k">文件夹</span></div>
<div class="a" style="left:512.5px;top:553.4px;line-height:12px;font-size:9.3px;color:#1c1c1c;letter-spacing:0.5px">2021/02/07 20:18</div>
<div class="a" style="left:619.0px;top:553.4px;line-height:12px;font-size:9.3px;color:#1c1c1c;letter-spacing:0.5px">drwxr-xr-x</div>
<div class="a" style="left:689.8px;top:553.4px;line-height:12px;font-size:9.3px;color:#1c1c1c;letter-spacing:0.5px;letter-spacing:0.75px">root/root</div>
<svg class="a" style="left:262.0px;top:568.4px" width="12" height="11" viewBox="0 0 12 11"><rect x="0.5" y="0.5" width="10" height="7.5" fill="#fff" stroke="#9a9a9a" stroke-width="0.8"/><path d="M2 2.5H9M2 4.2H7" stroke="#c5c5c5" stroke-width="0.7"/><circle cx="8" cy="7.5" r="1.9" fill="#e8a325"/><path d="M7 8.8V11L8 10.2L9 11V8.8Z" fill="#3a78c8"/></svg>
<div class="a" style="left:277.5px;top:567.6px;line-height:12px;font-size:9.3px;color:#1c1c1c;letter-spacing:0.5px;letter-spacing:0.28px">1_cnix.cc_bundle.crt</div>
<div class="a" style="right:1070.5px;top:567.6px;line-height:12px;text-align:right;font-size:9.3px;color:#1c1c1c;letter-spacing:0.5px">2.8 KB</div>
<div class="a" style="left:449.5px;top:567.6px;line-height:12px;font-size:9.3px;color:#1c1c1c;letter-spacing:0.5px"><span class="k">安全证书</span></div>
<div class="a" style="left:512.5px;top:567.6px;line-height:12px;font-size:9.3px;color:#1c1c1c;letter-spacing:0.5px">2021/02/27 19:13</div>
<div class="a" style="left:619.0px;top:567.6px;line-height:12px;font-size:9.3px;color:#1c1c1c;letter-spacing:0.5px">-rw-r--r--</div>
<div class="a" style="left:689.8px;top:567.6px;line-height:12px;font-size:9.3px;color:#1c1c1c;letter-spacing:0.5px;letter-spacing:0.75px">root/root</div>
<div class="a" style="left:259.0px;top:580.9px;width:497.0px;height:14.2px;background:#f7f7f7"></div>
<svg class="a" style="left:261.6px;top:580.8px" width="12" height="12" viewBox="0 0 12 12"><path d="M2.5 0.5H8L10.6 3.1V11.5H2.5Z" fill="#fff" stroke="#b4b4b4" stroke-width="0.8"/><path d="M8 0.5V3.1H10.6" fill="none" stroke="#b4b4b4" stroke-width="0.7"/><rect x="0.4" y="3.2" width="8" height="7.8" fill="#2b7fd3"/><rect x="4.2" y="3.8" width="2.8" height="2.8" fill="#a9d6f7" transform="rotate(20 5.6 5.2)"/><rect x="1.6" y="6.6" width="3.2" height="3.2" fill="#1565b8"/></svg>
<div class="a" style="left:277.5px;top:581.7px;line-height:12px;font-size:9.3px;color:#1c1c1c;letter-spacing:0.5px;letter-spacing:0.28px">2_cnix.cc.key</div>
<div class="a" style="right:1070.5px;top:581.7px;line-height:12px;text-align:right;font-size:9.3px;color:#1c1c1c;letter-spacing:0.5px">230 B</div>
<div class="a" style="left:449.5px;top:581.7px;line-height:12px;font-size:9.3px;color:#1c1c1c;letter-spacing:0.5px"><span class="k">注册表项</span></div>
<div class="a" style="left:512.5px;top:581.7px;line-height:12px;font-size:9.3px;color:#1c1c1c;letter-spacing:0.5px">2021/02/27 19:13</div>
<div class="a" style="left:619.0px;top:581.7px;line-height:12px;font-size:9.3px;color:#1c1c1c;letter-spacing:0.5px">-rw-r--r--</div>
<div class="a" style="left:689.8px;top:581.7px;line-height:12px;font-size:9.3px;color:#1c1c1c;letter-spacing:0.5px;letter-spacing:0.75px">root/root</div>
<svg class="a" style="left:263.5px;top:596.7px" width="9" height="11" viewBox="0 0 9 11"><path d="M0.5 0.5H6L8.5 3V10.5H0.5Z" fill="#fff" stroke="#b9b9b9" stroke-width="0.8"/><path d="M2 3.5H5M2 5.2H6.8M2 6.9H6.8M2 8.6H6.8" stroke="#cfcfcf" stroke-width="0.7"/></svg>
<div class="a" style="left:277.5px;top:595.9px;line-height:12px;font-size:9.3px;color:#1c1c1c;letter-spacing:0.5px">enable-php.conf</div>
<div class="a" style="right:1070.5px;top:595.9px;line-height:12px;text-align:right;font-size:9.3px;color:#1c1c1c;letter-spacing:0.5px">150 B</div>
<div class="a" style="left:449.5px;top:595.9px;line-height:12px;font-size:9.3px;color:#1c1c1c;letter-spacing:0.5px">CONF <span class="k">文件</span></div>
<div class="a" style="left:512.5px;top:595.9px;line-height:12px;font-size:9.3px;color:#1c1c1c;letter-spacing:0.5px">2021/02/25 14:05</div>
<div class="a" style="left:619.0px;top:595.9px;line-height:12px;font-size:9.3px;color:#1c1c1c;letter-spacing:0.5px">-rw-r--r--</div>
<div class="a" style="left:689.8px;top:595.9px;line-height:12px;font-size:9.3px;color:#1c1c1c;letter-spacing:0.5px;letter-spacing:0.75px">root/root</div>
<div class="a" style="left:259.0px;top:609.3px;width:497.0px;height:14.2px;background:#f7f7f7"></div>
<svg class="a" style="left:263.5px;top:610.9px" width="9" height="11" viewBox="0 0 9 11"><path d="M0.5 0.5H6L8.5 3V10.5H0.5Z" fill="#fff" stroke="#b9b9b9" stroke-width="0.8"/><path d="M2 3.5H5M2 5.2H6.8M2 6.9H6.8M2 8.6H6.8" stroke="#cfcfcf" stroke-width="0.7"/></svg>
<div class="a" style="left:277.5px;top:610.1px;line-height:12px;font-size:9.3px;color:#1c1c1c;letter-spacing:0.5px">enable-php-00.conf</div>
<div class="a" style="right:1070.5px;top:610.1px;line-height:12px;text-align:right;font-size:9.3px;color:#1c1c1c;letter-spacing:0.5px">1 B</div>
<div class="a" style="left:449.5px;top:610.1px;line-height:12px;font-size:9.3px;color:#1c1c1c;letter-spacing:0.5px">CONF <span class="k">文件</span></div>
<div class="a" style="left:512.5px;top:610.1px;line-height:12px;font-size:9.3px;color:#1c1c1c;letter-spacing:0.5px">2021/02/07 20:18</div>
<div class="a" style="left:619.0px;top:610.1px;line-height:12px;font-size:9.3px;color:#1c1c1c;letter-spacing:0.5px">-rw-r--r--</div>
<div class="a" style="left:689.8px;top:610.1px;line-height:12px;font-size:9.3px;color:#1c1c1c;letter-spacing:0.5px;letter-spacing:0.75px">root/root</div>
<svg class="a" style="left:263.5px;top:625.0px" width="9" height="11" viewBox="0 0 9 11"><path d="M0.5 0.5H6L8.5 3V10.5H0.5Z" fill="#fff" stroke="#b9b9b9" stroke-width="0.8"/><path d="M2 3.5H5M2 5.2H6.8M2 6.9H6.8M2 8.6H6.8" stroke="#cfcfcf" stroke-width="0.7"/></svg>
<div class="a" style="left:277.5px;top:624.2px;line-height:12px;font-size:9.3px;color:#1c1c1c;letter-spacing:0.5px">enable-php-52.conf</div>
<div class="a" style="right:1070.5px;top:624.2px;line-height:12px;text-align:right;font-size:9.3px;color:#1c1c1c;letter-spacing:0.5px">175 B</div>
<div class="a" style="left:449.5px;top:624.2px;line-height:12px;font-size:9.3px;color:#1c1c1c;letter-spacing:0.5px">CONF <span class="k">文件</span></div>
<div class="a" style="left:512.5px;top:624.2px;line-height:12px;font-size:9.3px;color:#1c1c1c;letter-spacing:0.5px">2021/02/07 20:18</div>
<div class="a" style="left:619.0px;top:624.2px;line-height:12px;font-size:9.3px;color:#1c1c1c;letter-spacing:0.5px">-rw-r--r--</div>
<div class="a" style="left:689.8px;top:624.2px;line-height:12px;font-size:9.3px;color:#1c1c1c;letter-spacing:0.5px;letter-spacing:0.75px">root/root</div>
<div class="a" style="left:259.0px;top:637.6px;width:497.0px;height:14.2px;background:#f7f7f7"></div>
<svg class="a" style="left:263.5px;top:639.2px" width="9" height="11" viewBox="0 0 9 11"><path d="M0.5 0.5H6L8.5 3V10.5H0.5Z" fill="#fff" stroke="#b9b9b9" stroke-width="0.8"/><path d="M2 3.5H5M2 5.2H6.8M2 6.9H6.8M2 8.6H6.8" stroke="#cfcfcf" stroke-width="0.7"/></svg>
<div class="a" style="left:277.5px;top:638.4px;line-height:12px;font-size:9.3px;color:#1c1c1c;letter-spacing:0.5px">enable-php-53.conf</div>
<div class="a" style="right:1070.5px;top:638.4px;line-height:12px;text-align:right;font-size:9.3px;color:#1c1c1c;letter-spacing:0.5px">175 B</div>
<div class="a" style="left:449.5px;top:638.4px;line-height:12px;font-size:9.3px;color:#1c1c1c;letter-spacing:0.5px">CONF <span class="k">文件</span></div>
<div class="a" style="left:512.5px;top:638.4px;line-height:12px;font-size:9.3px;color:#1c1c1c;letter-spacing:0.5px">2021/02/07 20:18</div>
<div class="a" style="left:619.0px;top:638.4px;line-height:12px;font-size:9.3px;color:#1c1c1c;letter-spacing:0.5px">-rw-r--r--</div>
<div class="a" style="left:689.8px;top:638.4px;line-height:12px;font-size:9.3px;color:#1c1c1c;letter-spacing:0.5px;letter-spacing:0.75px">root/root</div>
<svg class="a" style="left:263.5px;top:653.4px" width="9" height="11" viewBox="0 0 9 11"><path d="M0.5 0.5H6L8.5 3V10.5H0.5Z" fill="#fff" stroke="#b9b9b9" stroke-width="0.8"/><path d="M2 3.5H5M2 5.2H6.8M2 6.9H6.8M2 8.6H6.8" stroke="#cfcfcf" stroke-width="0.7"/></svg>
<div class="a" style="left:277.5px;top:652.6px;line-height:12px;font-size:9.3px;color:#1c1c1c;letter-spacing:0.5px">enable-php-54.conf</div>
<div class="a" style="right:1070.5px;top:652.6px;line-height:12px;text-align:right;font-size:9.3px;color:#1c1c1c;letter-spacing:0.5px">175 B</div>
<div class="a" style="left:449.5px;top:652.6px;line-height:12px;font-size:9.3px;color:#1c1c1c;letter-spacing:0.5px">CONF <span class="k">文件</span></div>
<div class="a" style="left:512.5px;top:652.6px;line-height:12px;font-size:9.3px;color:#1c1c1c;letter-spacing:0.5px">2021/02/07 20:18</div>
<div class="a" style="left:619.0px;top:652.6px;line-height:12px;font-size:9.3px;color:#1c1c1c;letter-spacing:0.5px">-rw-r--r--</div>
<div class="a" style="left:689.8px;top:652.6px;line-height:12px;font-size:9.3px;color:#1c1c1c;letter-spacing:0.5px;letter-spacing:0.75px">root/root</div>
<div class="a" style="left:259.0px;top:666.0px;width:497.0px;height:14.2px;background:#f7f7f7"></div>
<svg class="a" style="left:263.5px;top:667.6px" width="9" height="11" viewBox="0 0 9 11"><path d="M0.5 0.5H6L8.5 3V10.5H0.5Z" fill="#fff" stroke="#b9b9b9" stroke-width="0.8"/><path d="M2 3.5H5M2 5.2H6.8M2 6.9H6.8M2 8.6H6.8" stroke="#cfcfcf" stroke-width="0.7"/></svg>
<div class="a" style="left:277.5px;top:666.8px;line-height:12px;font-size:9.3px;color:#1c1c1c;letter-spacing:0.5px">enable-php-55.conf</div>
<div class="a" style="right:1070.5px;top:666.8px;line-height:12px;text-align:right;font-size:9.3px;color:#1c1c1c;letter-spacing:0.5px">175 B</div>
<div class="a" style="left:449.5px;top:666.8px;line-height:12px;font-size:9.3px;color:#1c1c1c;letter-spacing:0.5px">CONF <span class="k">文件</span></div>
<div class="a" style="left:512.5px;top:666.8px;line-height:12px;font-size:9.3px;color:#1c1c1c;letter-spacing:0.5px">2021/02/07 20:18</div>
<div class="a" style="left:619.0px;top:666.8px;line-height:12px;font-size:9.3px;color:#1c1c1c;letter-spacing:0.5px">-rw-r--r--</div>
<div class="a" style="left:689.8px;top:666.8px;line-height:12px;font-size:9.3px;color:#1c1c1c;letter-spacing:0.5px;letter-spacing:0.75px">root/root</div>
<svg class="a" style="left:263.5px;top:681.8px" width="9" height="11" viewBox="0 0 9 11"><path d="M0.5 0.5H6L8.5 3V10.5H0.5Z" fill="#fff" stroke="#b9b9b9" stroke-width="0.8"/><path d="M2 3.5H5M2 5.2H6.8M2 6.9H6.8M2 8.6H6.8" stroke="#cfcfcf" stroke-width="0.7"/></svg>
<div class="a" style="left:277.5px;top:681.0px;line-height:12px;font-size:9.3px;color:#1c1c1c;letter-spacing:0.5px">enable-php-56.conf</div>
<div class="a" style="right:1070.5px;top:681.0px;line-height:12px;text-align:right;font-size:9.3px;color:#1c1c1c;letter-spacing:0.5px">176 B</div>
<div class="a" style="left:449.5px;top:681.0px;line-height:12px;font-size:9.3px;color:#1c1c1c;letter-spacing:0.5px">CONF <span class="k">文件</span></div>
<div class="a" style="left:512.5px;top:681.0px;line-height:12px;font-size:9.3px;color:#1c1c1c;letter-spacing:0.5px">2021/02/24 21:27</div>
<div class="a" style="left:619.0px;top:681.0px;line-height:12px;font-size:9.3px;color:#1c1c1c;letter-spacing:0.5px">-rw-r--r--</div>
<div class="a" style="left:689.8px;top:681.0px;line-height:12px;font-size:9.3px;color:#1c1c1c;letter-spacing:0.5px;letter-spacing:0.75px">root/root</div>
<div class="a" style="left:259.0px;top:694.3px;width:497.0px;height:14.2px;background:#f7f7f7"></div>
<svg class="a" style="left:263.5px;top:695.9px" width="9" height="11" viewBox="0 0 9 11"><path d="M0.5 0.5H6L8.5 3V10.5H0.5Z" fill="#fff" stroke="#b9b9b9" stroke-width="0.8"/><path d="M2 3.5H5M2 5.2H6.8M2 6.9H6.8M2 8.6H6.8" stroke="#cfcfcf" stroke-width="0.7"/></svg>
<div class="a" style="left:277.5px;top:695.1px;line-height:12px;font-size:9.3px;color:#1c1c1c;letter-spacing:0.5px">enable-php-70.conf</div>
<div class="a" style="right:1070.5px;top:695.1px;line-height:12px;text-align:right;font-size:9.3px;color:#1c1c1c;letter-spacing:0.5px">175 B</div>
<div class="a" style="left:449.5px;top:695.1px;line-height:12px;font-size:9.3px;color:#1c1c1c;letter-spacing:0.5px">CONF <span class="k">文件</span></div>
<div class="a" style="left:512.5px;top:695.1px;line-height:12px;font-size:9.3px;color:#1c1c1c;letter-spacing:0.5px">2021/02/07 20:18</div>
<div class="a" style="left:619.0px;top:695.1px;line-height:12px;font-size:9.3px;color:#1c1c1c;letter-spacing:0.5px">-rw-r--r--</div>
<div class="a" style="left:689.8px;top:695.1px;line-height:12px;font-size:9.3px;color:#1c1c1c;letter-spacing:0.5px;letter-spacing:0.75px">root/root</div>
<svg class="a" style="left:263.5px;top:710.1px" width="9" height="11" viewBox="0 0 9 11"><path d="M0.5 0.5H6L8.5 3V10.5H0.5Z" fill="#fff" stroke="#b9b9b9" stroke-width="0.8"/><path d="M2 3.5H5M2 5.2H6.8M2 6.9H6.8M2 8.6H6.8" stroke="#cfcfcf" stroke-width="0.7"/></svg>
<div class="a" style="left:277.5px;top:709.3px;line-height:12px;font-size:9.3px;color:#1c1c1c;letter-spacing:0.5px">enable-php-71.conf</div>
<div class="a" style="right:1070.5px;top:709.3px;line-height:12px;text-align:right;font-size:9.3px;color:#1c1c1c;letter-spacing:0.5px">175 B</div>
<div class="a" style="left:449.5px;top:709.3px;line-height:12px;font-size:9.3px;color:#1c1c1c;letter-spacing:0.5px">CONF <span class="k">文件</span></div>
<div class="a" style="left:512.5px;top:709.3px;line-height:12px;font-size:9.3px;color:#1c1c1c;letter-spacing:0.5px">2021/02/07 20:18</div>
<div class="a" style="left:619.0px;top:709.3px;line-height:12px;font-size:9.3px;color:#1c1c1c;letter-spacing:0.5px">-rw-r--r--</div>
<div class="a" style="left:689.8px;top:709.3px;line-height:12px;font-size:9.3px;color:#1c1c1c;letter-spacing:0.5px;letter-spacing:0.75px">root/root</div>
<div class="a" style="left:259.0px;top:722.7px;width:497.0px;height:14.2px;background:#f7f7f7"></div>
<svg class="a" style="left:263.5px;top:724.3px" width="9" height="11" viewBox="0 0 9 11"><path d="M0.5 0.5H6L8.5 3V10.5H0.5Z" fill="#fff" stroke="#b9b9b9" stroke-width="0.8"/><path d="M2 3.5H5M2 5.2H6.8M2 6.9H6.8M2 8.6H6.8" stroke="#cfcfcf" stroke-width="0.7"/></svg>
<div class="a" style="left:277.5px;top:723.5px;line-height:12px;font-size:9.3px;color:#1c1c1c;letter-spacing:0.5px">enable-php-72.conf</div>
<div class="a" style="right:1070.5px;top:723.5px;line-height:12px;text-align:right;font-size:9.3px;color:#1c1c1c;letter-spacing:0.5px">176 B</div>
<div class="a" style="left:449.5px;top:723.5px;line-height:12px;font-size:9.3px;color:#1c1c1c;letter-spacing:0.5px">CONF <span class="k">文件</span></div>
<div class="a" style="left:512.5px;top:723.5px;line-height:12px;font-size:9.3px;color:#1c1c1c;letter-spacing:0.5px">2021/02/24 22:07</div>
<div class="a" style="left:619.0px;top:723.5px;line-height:12px;font-size:9.3px;color:#1c1c1c;letter-spacing:0.5px">-rw-r--r--</div>
<div class="a" style="left:689.8px;top:723.5px;line-height:12px;font-size:9.3px;color:#1c1c1c;letter-spacing:0.5px;letter-spacing:0.75px">root/root</div>
<svg class="a" style="left:263.5px;top:738.5px" width="9" height="11" viewBox="0 0 9 11"><path d="M0.5 0.5H6L8.5 3V10.5H0.5Z" fill="#fff" stroke="#b9b9b9" stroke-width="0.8"/><path d="M2 3.5H5M2 5.2H6.8M2 6.9H6.8M2 8.6H6.8" stroke="#cfcfcf" stroke-width="0.7"/></svg>
<div class="a" style="left:277.5px;top:737.7px;line-height:12px;font-size:9.3px;color:#1c1c1c;letter-spacing:0.5px">enable-php-73.conf</div>
<div class="a" style="right:1070.5px;top:737.7px;line-height:12px;text-align:right;font-size:9.3px;color:#1c1c1c;letter-spacing:0.5px">175 B</div>
<div class="a" style="left:449.5px;top:737.7px;line-height:12px;font-size:9.3px;color:#1c1c1c;letter-spacing:0.5px">CONF <span class="k">文件</span></div>
<div class="a" style="left:512.5px;top:737.7px;line-height:12px;font-size:9.3px;color:#1c1c1c;letter-spacing:0.5px">2021/02/07 20:18</div>
<div class="a" style="left:619.0px;top:737.7px;line-height:12px;font-size:9.3px;color:#1c1c1c;letter-spacing:0.5px">-rw-r--r--</div>
<div class="a" style="left:689.8px;top:737.7px;line-height:12px;font-size:9.3px;color:#1c1c1c;letter-spacing:0.5px;letter-spacing:0.75px">root/root</div>
<div class="a" style="left:259.0px;top:751.0px;width:497.0px;height:14.2px;background:#f7f7f7"></div>
<svg class="a" style="left:263.5px;top:752.6px" width="9" height="11" viewBox="0 0 9 11"><path d="M0.5 0.5H6L8.5 3V10.5H0.5Z" fill="#fff" stroke="#b9b9b9" stroke-width="0.8"/><path d="M2 3.5H5M2 5.2H6.8M2 6.9H6.8M2 8.6H6.8" stroke="#cfcfcf" stroke-width="0.7"/></svg>
<div class="a" style="left:277.5px;top:751.8px;line-height:12px;font-size:9.3px;color:#1c1c1c;letter-spacing:0.5px">enable-php-74.conf</div>
<div class="a" style="right:1070.5px;top:751.8px;line-height:12px;text-align:right;font-size:9.3px;color:#1c1c1c;letter-spacing:0.5px">175 B</div>
<div class="a" style="left:449.5px;top:751.8px;line-height:12px;font-size:9.3px;color:#1c1c1c;letter-spacing:0.5px">CONF <span class="k">文件</span></div>
<div class="a" style="left:512.5px;top:751.8px;line-height:12px;font-size:9.3px;color:#1c1c1c;letter-spacing:0.5px">2021/02/07 20:18</div>
<div class="a" style="left:619.0px;top:751.8px;line-height:12px;font-size:9.3px;color:#1c1c1c;letter-spacing:0.5px">-rw-r--r--</div>
<div class="a" style="left:689.8px;top:751.8px;line-height:12px;font-size:9.3px;color:#1c1c1c;letter-spacing:0.5px;letter-spacing:0.75px">root/root</div>
<svg class="a" style="left:263.5px;top:766.8px" width="9" height="11" viewBox="0 0 9 11"><path d="M0.5 0.5H6L8.5 3V10.5H0.5Z" fill="#fff" stroke="#b9b9b9" stroke-width="0.8"/><path d="M2 3.5H5M2 5.2H6.8M2 6.9H6.8M2 8.6H6.8" stroke="#cfcfcf" stroke-width="0.7"/></svg>
<div class="a" style="left:277.5px;top:766.0px;line-height:12px;font-size:9.3px;color:#1c1c1c;letter-spacing:0.5px">enable-php-75.conf</div>
<div class="a" style="right:1070.5px;top:766.0px;line-height:12px;text-align:right;font-size:9.3px;color:#1c1c1c;letter-spacing:0.5px">175 B</div>
<div class="a" style="left:449.5px;top:766.0px;line-height:12px;font-size:9.3px;color:#1c1c1c;letter-spacing:0.5px">CONF <span class="k">文件</span></div>
<div class="a" style="left:512.5px;top:766.0px;line-height:12px;font-size:9.3px;color:#1c1c1c;letter-spacing:0.5px">2021/02/07 20:18</div>
<div class="a" style="left:619.0px;top:766.0px;line-height:12px;font-size:9.3px;color:#1c1c1c;letter-spacing:0.5px">-rw-r--r--</div>
<div class="a" style="left:689.8px;top:766.0px;line-height:12px;font-size:9.3px;color:#1c1c1c;letter-spacing:0.5px;letter-spacing:0.75px">root/root</div>
<div class="a" style="left:259.0px;top:779.4px;width:497.0px;height:14.2px;background:#f7f7f7"></div>
<svg class="a" style="left:263.5px;top:781.0px" width="9" height="11" viewBox="0 0 9 11"><path d="M0.5 0.5H6L8.5 3V10.5H0.5Z" fill="#fff" stroke="#b9b9b9" stroke-width="0.8"/><path d="M2 3.5H5M2 5.2H6.8M2 6.9H6.8M2 8.6H6.8" stroke="#cfcfcf" stroke-width="0.7"/></svg>
<div class="a" style="left:277.5px;top:780.2px;line-height:12px;font-size:9.3px;color:#1c1c1c;letter-spacing:0.5px">enable-php-80.conf</div>
<div class="a" style="right:1070.5px;top:780.2px;line-height:12px;text-align:right;font-size:9.3px;color:#1c1c1c;letter-spacing:0.5px">236 B</div>
<div class="a" style="left:449.5px;top:780.2px;line-height:12px;font-size:9.3px;color:#1c1c1c;letter-spacing:0.5px">CONF <span class="k">文件</span></div>
<div class="a" style="left:512.5px;top:780.2px;line-height:12px;font-size:9.3px;color:#1c1c1c;letter-spacing:0.5px">2020/12/07 15:00</div>
<div class="a" style="left:619.0px;top:780.2px;line-height:12px;font-size:9.3px;color:#1c1c1c;letter-spacing:0.5px">-rw-rw-rw-</div>
<div class="a" style="left:689.8px;top:780.2px;line-height:12px;font-size:9.3px;color:#1c1c1c;letter-spacing:0.5px;letter-spacing:0.75px">root/root</div>
<svg class="a" style="left:263.5px;top:795.1px" width="9" height="11" viewBox="0 0 9 11"><path d="M0.5 0.5H6L8.5 3V10.5H0.5Z" fill="#fff" stroke="#8f8f8f" stroke-width="0.8"/><path d="M6 0.5V3H8.5" fill="none" stroke="#8f8f8f" stroke-width="0.7"/></svg>
<div class="a" style="left:277.5px;top:794.4px;line-height:12px;font-size:9.3px;color:#1c1c1c;letter-spacing:0.5px;letter-spacing:0.28px">fastcgi_params</div>
<div class="a" style="right:1070.5px;top:794.4px;line-height:12px;text-align:right;font-size:9.3px;color:#1c1c1c;letter-spacing:0.5px">1,007 B</div>
<div class="a" style="left:449.5px;top:794.4px;line-height:12px;font-size:9.3px;color:#1c1c1c;letter-spacing:0.5px">.file</div>
<div class="a" style="left:512.5px;top:794.4px;line-height:12px;font-size:9.3px;color:#1c1c1c;letter-spacing:0.5px">2020/02/22 10:58</div>
<div class="a" style="left:619.0px;top:794.4px;line-height:12px;font-size:9.3px;color:#1c1c1c;letter-spacing:0.5px">-rw-r--r--</div>
<div class="a" style="left:689.8px;top:794.4px;line-height:12px;font-size:9.3px;color:#1c1c1c;letter-spacing:0.5px;letter-spacing:0.75px">root/root</div>
<div class="a" style="left:259.0px;top:807.7px;width:497.0px;height:14.2px;background:#f7f7f7"></div>
<svg class="a" style="left:263.5px;top:809.3px" width="9" height="11" viewBox="0 0 9 11"><path d="M0.5 0.5H6L8.5 3V10.5H0.5Z" fill="#fff" stroke="#8f8f8f" stroke-width="0.8"/><path d="M6 0.5V3H8.5" fill="none" stroke="#8f8f8f" stroke-width="0.7"/></svg>
<div class="a" style="left:277.5px;top:808.5px;line-height:12px;font-size:9.3px;color:#1c1c1c;letter-spacing:0.5px;letter-spacing:0.28px">fastcgi_params.default</div>
<div class="a" style="right:1070.5px;top:808.5px;line-height:12px;text-align:right;font-size:9.3px;color:#1c1c1c;letter-spacing:0.5px">1,007 B</div>
<div class="a" style="left:449.5px;top:808.5px;line-height:12px;font-size:9.3px;color:#1c1c1c;letter-spacing:0.5px">DEFAULT ...</div>
<div class="a" style="left:512.5px;top:808.5px;line-height:12px;font-size:9.3px;color:#1c1c1c;letter-spacing:0.5px">2020/02/22 10:58</div>
<div class="a" style="left:619.0px;top:808.5px;line-height:12px;font-size:9.3px;color:#1c1c1c;letter-spacing:0.5px">-rw-r--r--</div>
<div class="a" style="left:689.8px;top:808.5px;line-height:12px;font-size:9.3px;color:#1c1c1c;letter-spacing:0.5px;letter-spacing:0.75px">root/root</div>
<div class="a" style="left:253.2px;top:565.7px;width:527.6px;height:29.2px;border:1.9px solid #dc2029"></div>
<div class="a" style="left:1504.0px;top:538.0px;width:6.3px;height:152.0px;background:#e1e1e1"></div>
<div class="a" style="left:1502.0px;top:524.0px;width:1.0px;height:10.5px;background:#d8d8d8"></div>
<div class="a" style="left:1509.5px;top:504.0px;width:2.0px;height:12.0px;background:#8c8c8c"></div>
<div class="a" style="left:0.0px;top:817.5px;width:1512.0px;height:2.0px;background:#fff"></div>
<div class="a" style="left:0.0px;top:819.3px;width:1512.0px;height:31.7px;background:#0b0b0c"></div>
<div class="a" style="left:346.7px;top:819.3px;width:37.5px;height:31.7px;background:#333436"></div>
<div class="a" style="left:310.8px;top:849.3px;width:31.7px;height:1.7px;background:#86c3ee"></div>
<div class="a" style="left:346.7px;top:849.3px;width:37.5px;height:1.7px;background:#86c3ee"></div>
<div class="a" style="left:388.0px;top:849.3px;width:25.5px;height:1.7px;background:#86c3ee"></div>
<div class="a" style="left:426.7px;top:849.3px;width:30.8px;height:1.7px;background:#86c3ee"></div>
<div class="a" style="left:414.5px;top:849.3px;width:3.0px;height:1.7px;background:#5f8fb0"></div>
<svg class="a" style="left:12.5px;top:828.3px" width="13" height="13" viewBox="0 0 13 13"><path d="M0 1.9L5.3 1.1V6.1H0ZM6 1L13 0V6.1H6ZM0 6.8H5.3V11.8L0 11.1ZM6 6.8H13V13L6 12Z" fill="#fff"/></svg>
<svg class="a" style="left:49.5px;top:828px" width="14" height="14" viewBox="0 0 14 14"><circle cx="8.8" cy="5" r="3.9" fill="none" stroke="#fff" stroke-width="1.3"/><path d="M6 7.9L1 13" stroke="#fff" stroke-width="1.4"/></svg>
<svg class="a" style="left:87.5px;top:828px" width="14" height="14" viewBox="0 0 14 14"><circle cx="7" cy="7" r="5.2" fill="none" stroke="#fff" stroke-width="2"/></svg>
<svg class="a" style="left:125px;top:828.5px" width="14" height="13" viewBox="0 0 14 13"><rect x="2" y="3.4" width="7.4" height="6.2" fill="none" stroke="#fff" stroke-width="1.2"/><path d="M1.2 1H10.2M1.2 12H10.2" stroke="#fff" stroke-width="1.2"/><path d="M12.3 2V11" stroke="#fff" stroke-width="1.3" stroke-dasharray="1.6 1.2 6 0"/></svg>
<svg class="a" style="left:164px;top:826px" width="17" height="16.5" viewBox="0 0 17 16.5"><rect x="0.7" y="0.7" width="15.6" height="15.1" fill="#0a1a26" stroke="#26c0f0" stroke-width="1.3"/><text x="3" y="11.8" font-family="Liberation Sans,sans-serif" font-size="9.5" font-weight="bold" fill="#31c5f4">Ps</text></svg>
<svg class="a" style="left:202px;top:826px" width="17" height="16.5" viewBox="0 0 17 16.5"><rect x="0.7" y="0.7" width="15.6" height="15.1" fill="#1b0a26" stroke="#d48cf5" stroke-width="1.3"/><text x="3.4" y="11.8" font-family="Liberation Sans,sans-serif" font-size="9.5" font-weight="bold" fill="#e29bff">Pr</text></svg>
<svg class="a" style="left:239.5px;top:824.5px" width="20" height="20" viewBox="0 0 20 20"><path d="M14 1L19 3V15.5L14 17.5Z" fill="#8661c5"/><path d="M14 1L4.5 10.5L1.8 8.4L0.6 9V13L1.8 13.6L4.5 11.6L14 17.5V13.2L8.3 9.3L14 5.4Z" fill="#9a78d6"/><path d="M1 16.3L13.5 19.3L19 17V15.5L13.5 17.8L1 15Z" fill="#6f4bb0"/></svg>
<svg class="a" style="left:278px;top:825px" width="20" height="20" viewBox="0 0 20 20"><path d="M14.5 0.5L19.5 2.8V17.2L14.5 19.5Z" fill="#2a9fe8"/><path d="M14.5 0.5L5 9.2L2 6.8L0.4 7.6L3.6 10L0.4 12.4L2 13.2L5 10.8L14.5 19.5V14.2L9 10L14.5 5.8Z" fill="#1f8ad6"/></svg>
<svg class="a" style="left:317.5px;top:826px" width="19" height="19" viewBox="-9.5 -9.5 19 19"><circle r="9.2" fill="#db4437"/><path d="M0 0L-7.97 -4.6A9.2 9.2 0 0 0 -1.6 9.06L3.6 2Z" fill="#0f9d58"/><path d="M0 0L3.98 2.3L-1.6 9.06A9.2 9.2 0 0 0 9.2 -1.4L8.9 -2.3H0Z" fill="#ffcd40"/><circle r="4.3" fill="#f1f1f1"/><circle r="3.4" fill="#4285f4"/></svg>
<svg class="a" style="left:356px;top:825.5px" width="20" height="19" viewBox="0 0 20 19"><rect x="5" y="0.5" width="14" height="10.5" fill="#4a9ae6"/><rect x="6.2" y="1.7" width="11.6" height="8" fill="#7dbcf5"/><rect x="0.5" y="5" width="14.5" height="10.5" fill="#d8d8d8"/><rect x="1.5" y="6" width="12.5" height="8.4" fill="#1a1a1a"/><rect x="6" y="15.5" width="3.6" height="1.6" fill="#bdbdbd"/><rect x="3.6" y="17" width="8.4" height="1.2" fill="#e4e4e4"/></svg>
<svg class="a" style="left:395px;top:827px" width="18" height="16" viewBox="0 0 18 16"><path d="M0 1H6L7.4 2.6H17V15H0Z" fill="#e8b036"/><path d="M0 4H18V15.5H0Z" fill="#fbd465"/><path d="M3.2 9.5H14.8V15.5H3.2Z" fill="#3d9bea"/><rect x="7" y="12.6" width="4" height="2.9" fill="#fbd465"/></svg>
<svg class="a" style="left:433.5px;top:826px" width="18" height="18" viewBox="0 0 18 18"><rect x="1" y="1" width="16" height="16" rx="2.5" fill="#f4f4f4" transform="rotate(-6 9 9)"/><text x="5.6" y="13" font-family="Liberation Serif,serif" font-size="10.5" fill="#333">T</text></svg>
<div class="a" style="left:1416.0px;top:7.7px;width:9.0px;height:1.0px;background:#333"></div>
<svg class="a" style="left:1451px;top:3.4px" width="9.2" height="9.2" viewBox="0 0 10 10"><rect x="0.5" y="2.3" width="7" height="7" fill="none" stroke="#333" stroke-width="1"/><path d="M2.3 2.3V0.6H9.3V7.6H7.6" fill="none" stroke="#333" stroke-width="1"/></svg>
<svg class="a" style="left:1488px;top:3.3px" width="9" height="9" viewBox="0 0 10 10"><path d="M0.8 0.8L9 9M9 0.8L0.8 9" stroke="#222" stroke-width="1.1"/></svg>
<svg class="a" style="left:1.5px;top:2px" width="13" height="13" viewBox="0 0 13 13"><rect x="4" y="0.5" width="8.6" height="6.4" fill="#4c9be4"/><rect x="4.8" y="1.3" width="7" height="4.6" fill="#8cc4f4"/><rect x="0.4" y="3.3" width="9" height="6.6" fill="#cfcfcf"/><rect x="1.1" y="4" width="7.6" height="5" fill="#1c1c1c"/><rect x="3.4" y="9.9" width="2.8" height="1.2" fill="#9a9a9a"/><rect x="2" y="11" width="5.8" height="0.9" fill="#bbb"/></svg>
<svg class="a" style="left:1480.5px;top:25.7px" width="13" height="11" viewBox="0 0 13 11"><path d="M0 0H5.8V4.8H0ZM7 0H12.8V4.8H7ZM0 5.8H5.8V10.6H0ZM7 5.8H12.8V10.6H7Z" fill="#7e7e7e"/></svg>
<svg class="a" style="left:1497px;top:25.7px" width="13" height="11" viewBox="0 0 13 11"><path d="M0 1H12.5M0 5.3H12.5M0 9.6H12.5" stroke="#7e7e7e" stroke-width="1.7"/></svg>
<svg class="a" style="left:122.5px;top:24.5px" width="17" height="14" viewBox="0 0 17 14"><path d="M1 12.6V1.6Q1 0.8 1.8 0.8H5.4L7 2.6H12.2Q13 2.6 13 3.4V5" fill="none" stroke="#3a8be0" stroke-width="1.3"/><path d="M1 12.8L3.7 5.4H16L13.2 12.8Z" fill="#fff" stroke="#3a8be0" stroke-width="1.3" stroke-linejoin="round"/></svg>
<svg class="a" style="left:1393.5px;top:455.8px" width="10" height="14" viewBox="0 0 10 14"><path d="M6.2 0L1 7.2H4.4L2.6 13.4L8.8 5.2H5.2L7.6 0Z" fill="#23c12b"/></svg>
<svg class="a" style="left:1408.8px;top:456.3px" width="14" height="13" viewBox="0 0 14 13"><path d="M3.2 0.6H6.4L8.8 3V8.6H3.2Z M0.6 3.4H3.2" fill="none" stroke="#a0a0a0" stroke-width="1.1"/><path d="M0.6 3.6L3 1M6.2 4.4H9.6L12.2 7V12.4H6.2Z" fill="#0d0f1a" stroke="#a0a0a0" stroke-width="1.1"/></svg>
<svg class="a" style="left:1426px;top:456.3px" width="14" height="13" viewBox="0 0 14 13"><path d="M0.5 1.2H8.6V10.4H0.5Z" fill="#a0a0a0"/><rect x="2.6" y="0" width="4" height="2" fill="#d0d0d0"/><path d="M5.6 4.4H9.8L12.6 7.2V12.4H5.6Z" fill="#0d0f1a" stroke="#a0a0a0" stroke-width="1.1"/></svg>
<svg class="a" style="left:1443.5px;top:457px" width="12" height="12" viewBox="0 0 12 12"><circle cx="4.9" cy="4.9" r="3.6" fill="none" stroke="#a0a0a0" stroke-width="1.8"/><path d="M7.6 7.6L11.3 11.3" stroke="#a0a0a0" stroke-width="2"/></svg>
<svg class="a" style="left:1460.3px;top:456.8px" width="13" height="13" viewBox="-6.5 -6.5 13 13"><g fill="#a0a0a0"><rect x="-1.3" y="-6.3" width="2.6" height="3.2" transform="rotate(0)"/><rect x="-1.3" y="-6.3" width="2.6" height="3.2" transform="rotate(45)"/><rect x="-1.3" y="-6.3" width="2.6" height="3.2" transform="rotate(90)"/><rect x="-1.3" y="-6.3" width="2.6" height="3.2" transform="rotate(135)"/><rect x="-1.3" y="-6.3" width="2.6" height="3.2" transform="rotate(180)"/><rect x="-1.3" y="-6.3" width="2.6" height="3.2" transform="rotate(225)"/><rect x="-1.3" y="-6.3" width="2.6" height="3.2" transform="rotate(270)"/><rect x="-1.3" y="-6.3" width="2.6" height="3.2" transform="rotate(315)"/></g><circle r="3.3" fill="none" stroke="#a0a0a0" stroke-width="2.4"/></svg>
<svg class="a" style="left:1478.2px;top:457.2px" width="12" height="12" viewBox="0 0 12 12"><path d="M6 0.5V10M1.2 5.4L6 10.2L10.8 5.4" fill="none" stroke="#a0a0a0" stroke-width="2.3"/></svg>
<svg class="a" style="left:1495.6px;top:457.3px" width="13" height="11" viewBox="0 0 13 11"><rect x="0.8" y="0.8" width="11" height="9" fill="none" stroke="#a0a0a0" stroke-width="1.4"/><rect x="0.8" y="0.8" width="11" height="2.2" fill="#a0a0a0"/></svg>
<svg class="a" style="left:589.3px;top:504.6px" width="12" height="11" viewBox="0 0 12 11"><path d="M9.6 3.6A4.2 4.2 0 0 0 1.8 4.6M2.2 7.4A4.2 4.2 0 0 0 10 6.4" fill="none" stroke="#8e8e8e" stroke-width="1.4"/><path d="M7.4 3.9H11V0.4ZM4.4 7.1H0.8V10.6Z" fill="#8e8e8e"/></svg>
<svg class="a" style="left:606.5px;top:504.6px" width="8" height="11" viewBox="0 0 8 11"><path d="M4.6 10.4V1.6M1.6 4.4L4.6 1.2L7.6 4.4M0.4 10.2H4.6" fill="none" stroke="#8e8e8e" stroke-width="1.3"/></svg>
<svg class="a" style="left:618px;top:504.2px" width="12" height="11" viewBox="0 0 12 11"><path d="M4.6 0H7.4V3.6H9.8L6 7.4L2.2 3.6H4.6Z" fill="#8e8e8e"/><rect x="0.3" y="7.8" width="11.4" height="2.8" fill="#8e8e8e"/></svg>
<svg class="a" style="left:634.6px;top:504.2px" width="12" height="11" viewBox="0 0 12 11"><path d="M4.6 7.4H7.4V3.8H9.8L6 0L2.2 3.8H4.6Z" fill="#8e8e8e"/><rect x="0.3" y="7.8" width="11.4" height="2.8" fill="#8e8e8e"/></svg>
<svg class="a" style="left:1170.8px;top:826.5px" width="19" height="18" viewBox="0 0 19 18"><circle cx="9" cy="9" r="8.4" fill="#1e8de6" stroke="#e8f4ff" stroke-width="1"/><text x="5.4" y="13.4" font-family="Liberation Sans,sans-serif" font-size="12.5" font-weight="bold" fill="#fff">?</text><circle cx="15.5" cy="14.2" r="2.6" fill="#3aa0f0" stroke="#fff" stroke-width="0.6"/></svg>
<svg class="a" style="left:1195.8px;top:831px" width="11" height="7" viewBox="0 0 11 7"><path d="M0.8 6L5.4 1.2L10 6" fill="none" stroke="#fff" stroke-width="1.2"/></svg>
<svg class="a" style="left:1213.5px;top:828.5px" width="14" height="13" viewBox="0 0 14 13"><path d="M3 12.6V4L3.6 0.6L6 3H9.8L12.2 0.6L12.8 4V12.6Z" fill="#e9ba8a"/><path d="M0.6 8.6Q0.4 12.6 3.4 12.2" fill="none" stroke="#e9ba8a" stroke-width="1.1"/><circle cx="6" cy="6.2" r="0.55" fill="#7a5a3c"/><circle cx="9.8" cy="6.2" r="0.55" fill="#7a5a3c"/></svg>
<div class="a" style="left:1234.3px;top:829.7px;line-height:12px;font-size:9.2px;letter-spacing:0px;color:#b47fdc">21</div>
<div class="a" style="left:1253.0px;top:829.7px;line-height:12px;font-size:9.2px;letter-spacing:0px;color:#e465a6">64</div>
<div class="a" style="left:1274.5px;top:829.7px;line-height:12px;font-size:9.2px;letter-spacing:0px;color:#6bbccb">2</div>
<div class="a" style="left:1290.3px;top:829.7px;line-height:12px;font-size:9.2px;letter-spacing:0px;color:#5cc2d2">50</div>
<svg class="a" style="left:1309.5px;top:829px" width="12" height="12" viewBox="0 0 12 12"><circle cx="9.6" cy="10" r="1.2" fill="#fff"/><path d="M5.6 10.6A4.4 4.4 0 0 1 10.4 5.9" fill="none" stroke="#e8e8e8" stroke-width="1"/><path d="M3 10.6A7 7 0 0 1 10.4 3.3" fill="none" stroke="#bdbdbd" stroke-width="1"/><path d="M0.5 10.6A9.6 9.6 0 0 1 10.4 0.7" fill="none" stroke="#8a8a8a" stroke-width="1"/></svg>
<svg class="a" style="left:1326.3px;top:829px" width="15" height="13" viewBox="0 0 15 13"><path d="M0.6 4.4H3L6.4 1.2V11.8L3 8.6H0.6Z" fill="none" stroke="#fff" stroke-width="1"/><path d="M8.4 4.4Q9.8 6.5 8.4 8.6M10.4 2.6Q12.8 6.5 10.4 10.4" fill="none" stroke="#fff" stroke-width="0.9"/><path d="M12.4 1Q15.6 6.5 12.4 12" fill="none" stroke="#9a9a9a" stroke-width="0.9"/></svg>
<svg class="a" style="left:1345.5px;top:829.5px" width="14" height="12" viewBox="0 0 14 12"><rect x="3.6" y="3.6" width="9.6" height="6" fill="none" stroke="#fff" stroke-width="1"/><rect x="4.8" y="4.8" width="6.4" height="3.6" fill="#fff"/><path d="M1.8 0.4V3.2M0.4 1.6H3.2V3.4Q1.8 5 1.8 6.6V9" fill="none" stroke="#fff" stroke-width="1"/></svg>
<div class="a" style="left:1366.0px;top:829.6px;line-height:12px;font-size:9.7px;letter-spacing:0.1px;color:#fff">ENG</div>
<div class="a" style="left:1412.6px;top:821.9px;line-height:12px;font-size:9.6px;letter-spacing:0.2px;color:#fff">19:13:36</div>
<div class="a" style="left:1395.6px;top:837.2px;line-height:12px;font-size:9.6px;letter-spacing:0.55px;color:#fff">2021/2/27/周六</div>
<svg class="a" style="left:1479px;top:829px" width="14" height="13" viewBox="0 0 14 13"><path d="M0.8 0.8H12V9.4H5L2.6 11.8V9.4H0.8Z" fill="none" stroke="#fff" stroke-width="1.2"/><path d="M3 3.4H10M3 5.6H10" stroke="#fff" stroke-width="0.9"/><circle cx="11.6" cy="10.4" r="1.7" fill="#0b0b0c" stroke="#fff" stroke-width="0.8"/></svg>
<div class="a" style="left:111.2px;top:411.0px;width:1.2px;height:1.4px;background:#8c8c8c"></div>
<div class="a" style="left:111.2px;top:416.0px;width:1.2px;height:1.4px;background:#8c8c8c"></div>
<div class="a" style="left:111.2px;top:421.0px;width:1.2px;height:1.4px;background:#8c8c8c"></div>
<div class="a" style="left:111.2px;top:426.0px;width:1.2px;height:1.4px;background:#8c8c8c"></div>
<div class="a" style="left:189.8px;top:405.2px;width:9.4px;height:22.2px;border:1.3px solid #982538"></div>
<div class="wm wl"><span style="left:127.5px;top:93.1px">@Wriprin</span><span style="left:388.0px;top:356.1px">@Wriprin</span><span style="left:648.5px;top:619.1px">@Wriprin</span><span style="left:909.0px;top:882.1px">@Wriprin</span><span style="left:774.5px;top:-26.5px">@Wriprin</span><span style="left:1035.0px;top:236.5px">@Wriprin</span><span style="left:1295.5px;top:499.5px">@Wriprin</span><span style="left:1556.0px;top:762.5px">@Wriprin</span><span style="left:1.8px;top:742.5px">@Wriprin</span></div>
<div class="wm wd"><span style="left:127.5px;top:93.1px">@Wriprin</span><span style="left:388.0px;top:356.1px">@Wriprin</span><span style="left:648.5px;top:619.1px">@Wriprin</span><span style="left:909.0px;top:882.1px">@Wriprin</span><span style="left:774.5px;top:-26.5px">@Wriprin</span><span style="left:1035.0px;top:236.5px">@Wriprin</span><span style="left:1295.5px;top:499.5px">@Wriprin</span><span style="left:1556.0px;top:762.5px">@Wriprin</span><span style="left:1.8px;top:742.5px">@Wriprin</span></div>
<div class="a" style="left:1328.3px;top:806.4px;font-size:15.2px;line-height:22px;font-weight:300;color:rgba(255,255,255,0.6);-webkit-text-stroke:0.45px rgba(120,120,120,0.5);letter-spacing:2.55px;text-shadow:0 0 1.2px rgba(90,90,90,0.45)">@稀土掘金技术社区</div>
</body></html>
